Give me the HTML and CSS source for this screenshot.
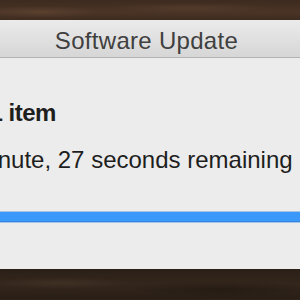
FILE: index.html
```html
<!DOCTYPE html>
<html>
<head>
<meta charset="utf-8">
<link rel="stylesheet" href="styles.css">
</head>
<body>
<div class="desk desk-top"></div>
<div class="window">
  <div class="titlebar">Software Update</div>
  <div class="content">
    <div class="heading">Installing 1 item</div>
    <div class="status">About 1 minute, 27 seconds remaining</div>
    <div class="progress"><div class="fill" style="width:100%"></div></div>
  </div>
</div>
<div class="desk desk-bottom"></div>
</body>
</html>
```
FILE: styles.css
```css
html, body {
  margin: 0;
  padding: 0;
  width: 300px;
  height: 300px;
  overflow: hidden;
  background: #2f231a;
  font-family: "Liberation Sans", Arial, sans-serif;
}
.desk {
  width: 300px;
}
.desk-top {
  height: 20px;
  background:
    radial-gradient(ellipse 60px 6px at 40px 12px, rgba(120,88,62,0.35), rgba(0,0,0,0)),
    radial-gradient(ellipse 80px 5px at 190px 8px, rgba(110,80,56,0.3), rgba(0,0,0,0)),
    linear-gradient(180deg, #3d2b1f 0%, #4a3426 60%, #3e2c20 100%);
}
.desk-bottom {
  height: 30px;
  background:
    radial-gradient(ellipse 70px 6px at 60px 14px, rgba(90,68,50,0.35), rgba(0,0,0,0)),
    radial-gradient(ellipse 90px 8px at 220px 20px, rgba(20,14,10,0.35), rgba(0,0,0,0)),
    linear-gradient(180deg, #2b2018 0%, #33261c 50%, #291e16 100%);
}
.window {
  width: 573px;
  margin-left: -140px;
  background: #ececec;
}
.titlebar {
  height: 38px;
  box-sizing: border-box;
  padding-top: 8px;
  text-align: center;
  font-size: 24px;
  line-height: 26px;
  letter-spacing: 0.3px;
  color: #404040;
  background: linear-gradient(180deg, #ebebeb 0%, #d6d6d6 100%);
  border-bottom: 1px solid #b3b3b3;
}
.content {
  height: 211px;
  box-sizing: border-box;
  padding: 41px 0 0 23px;
  overflow: hidden;
  color: #1e1e1e;
}
.heading {
  font-size: 24px;
  line-height: 28px;
  font-weight: bold;
  letter-spacing: -0.5px;
}
.status {
  margin-top: 19px;
  font-size: 24px;
  line-height: 28px;
}
.progress {
  margin-top: 37px;
  margin-left: -23px;
  height: 12px;
  box-sizing: border-box;
  border: 1px solid #a8c4e4;
  background: #d8d8d8;
}
.fill {
  height: 100%;
  background: #3b99fc;
  box-shadow: inset 0 -1px 0 #2f86e6;
}
```
